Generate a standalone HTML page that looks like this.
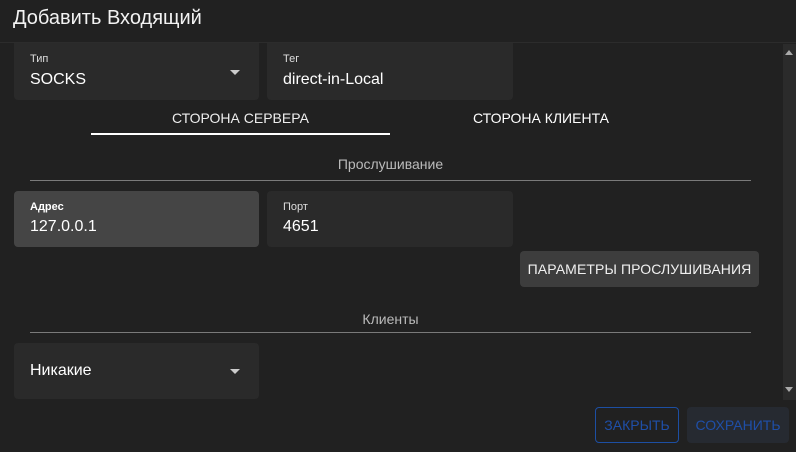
<!DOCTYPE html>
<html><head><meta charset="utf-8"><style>
*{box-sizing:border-box;margin:0;padding:0}
body{width:796px;height:452px;background:#212121;font-family:"Liberation Sans",sans-serif;color:#fff;position:relative;overflow:hidden}
.a{position:absolute}
.f{position:absolute;background:#2a2a2a;border-radius:4px}
.lb{position:absolute;left:16px;top:11px;font-size:11px;color:#ddd}
.v{position:absolute;left:16px;top:29px;font-size:16px;color:#fff}
.arr{position:absolute;width:0;height:0;border-left:5px solid transparent;border-right:5px solid transparent;border-top:5px solid #ccc}
.hr{position:absolute;height:1px;background:#7a7a7a}
</style></head><body>
<div class="a" style="left:0;top:0;width:796px;height:43px;background:#212121;border-bottom:1px solid #2c2c2c"></div>
<div class="a" style="left:13px;top:7px;font-size:20px;color:#f2f2f2">Добавить Входящий</div>

<div class="f" style="left:14px;top:43px;width:245px;height:57px;border-radius:0 0 4px 4px"><div class="lb" style="top:10px">Тип</div><div class="v" style="top:28px">SOCKS</div><div class="arr" style="left:216px;top:27px"></div></div>
<div class="f" style="left:267px;top:43px;width:246px;height:57px;border-radius:0 0 4px 4px"><div class="lb" style="top:10px">Тег</div><div class="v" style="top:28px">direct-in-Local</div></div>

<div class="a" style="left:91px;top:110px;width:299px;text-align:center;font-size:14px;color:#eee">СТОРОНА СЕРВЕРА</div>
<div class="a" style="left:91px;top:133px;width:299px;height:2px;background:#fff"></div>
<div class="a" style="left:390px;top:110px;width:302px;text-align:center;font-size:14px;color:#fff">СТОРОНА КЛИЕНТА</div>

<div class="a" style="left:30px;top:156px;width:721px;text-align:center;font-size:14px;color:#bbb">Прослушивание</div>
<div class="hr" style="left:30px;top:180px;width:721px"></div>

<div class="f" style="left:14px;top:191px;width:245px;height:56px;background:#454545"><div class="lb" style="top:10px;color:#fff;font-weight:bold">Адрес</div><div class="v" style="top:27px">127.0.0.1</div></div>
<div class="f" style="left:267px;top:191px;width:246px;height:56px"><div class="lb" style="top:10px">Порт</div><div class="v" style="top:27px">4651</div></div>

<div class="a" style="left:520px;top:251px;width:239px;height:36px;background:#3d3d3d;border-radius:4px;text-align:center;line-height:36px;font-size:14px;letter-spacing:0.1px;color:#f0f0f0">ПАРАМЕТРЫ ПРОСЛУШИВАНИЯ</div>

<div class="a" style="left:30px;top:311px;width:721px;text-align:center;font-size:14px;color:#bbb">Клиенты</div>
<div class="hr" style="left:30px;top:332px;width:721px"></div>

<div class="f" style="left:14px;top:343px;width:245px;height:56px"><div class="v" style="top:19px">Никакие</div><div class="arr" style="left:216px;top:26px"></div></div>

<div class="a" style="left:783px;top:44px;width:13px;height:356px;background:#2b2b2b"></div>
<div class="a" style="left:785px;top:50px;width:0;height:0;border-left:4px solid transparent;border-right:4px solid transparent;border-bottom:5px solid #aaa"></div>
<div class="a" style="left:785px;top:387px;width:0;height:0;border-left:4px solid transparent;border-right:4px solid transparent;border-top:5px solid #aaa"></div>

<div class="a" style="left:595px;top:407px;width:84px;height:36px;border:1px solid #1d4fa3;border-radius:4px;text-align:center;line-height:34px;font-size:14px;color:#1f4fa8">ЗАКРЫТЬ</div>
<div class="a" style="left:687px;top:407px;width:102px;height:36px;background:#262a31;border-radius:4px;text-align:center;line-height:36px;font-size:14px;color:#1f4fa8">СОХРАНИТЬ</div>
</body></html>
